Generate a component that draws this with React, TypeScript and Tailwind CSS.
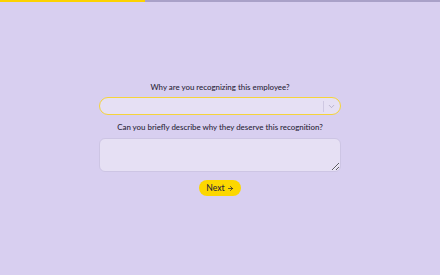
import { ChevronDown, ArrowRight } from "lucide-react";

export default function App() {
  return (
    <div
      className="w-[440px] h-[275px] bg-[#d8cff0] flex flex-col"
      style={{ fontFamily: 'Lato, "Noto Sans", sans-serif' }}
    >
      {/* progress */}
      <div className="h-[2px] w-full bg-[#a9a1c8] flex">
        <div className="h-full w-[145px] bg-[#fcd200]" />
      </div>

      <div className="flex flex-col items-center pt-[79px]">
        <label className="text-[7.9px] font-medium text-[#2b2638] leading-[12px]">
          Why are you recognizing this employee?
        </label>
        <div className="mt-[4px] w-[242px] h-[18px] rounded-full border-[1.5px] border-[#f5d43a] bg-[#e6e0f4] flex items-center justify-end pr-[4px]">
          <div className="h-[11px] w-px bg-[#cfc8e2] mr-[3px]" />
          <ChevronDown size={9} className="text-[#a9a3bd]" strokeWidth={2} />
        </div>

        <label className="mt-[6px] text-[7.9px] font-medium text-[#2b2638] leading-[12px]">
          Can you briefly describe why they deserve this recognition?
        </label>
        <textarea className="mt-[5px] w-[242px] h-[34px] rounded-[6px] border border-[#cdc5e4] bg-[#e6e0f4] outline-none resize-y" />

        <button className="mt-[8px] w-[42px] h-[16px] rounded-full bg-[#fcd700] text-[8.6px] font-medium text-[#2b2638] flex items-center justify-center gap-[2px]">
          Next <ArrowRight size={7} strokeWidth={2.5} />
        </button>
      </div>
    </div>
  );
}
